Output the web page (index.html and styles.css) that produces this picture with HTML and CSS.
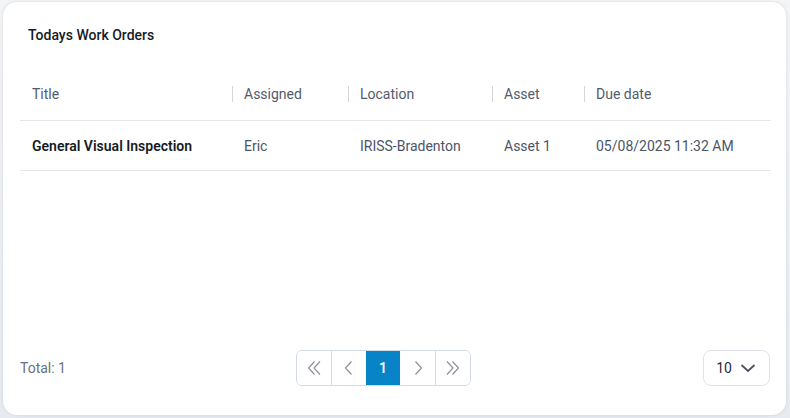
FILE: index.html
```html
<!DOCTYPE html>
<html>
<head>
  <title>Todays Work Orders</title>
  <link rel="stylesheet" href="styles.css">
</head>
<body>

  <div class="card">
    <h3 class="card-title">Todays Work Orders</h3>

    <div class="table-wrap">
      <table class="orders">
        <colgroup>
          <col style="width: 212px">
          <col style="width: 116px">
          <col style="width: 144px">
          <col style="width: 92px">
          <col>
        </colgroup>
        <thead>
          <tr>
            <th>Title</th>
            <th>Assigned</th>
            <th>Location</th>
            <th>Asset</th>
            <th>Due date</th>
          </tr>
        </thead>
        <tbody>
          <tr>
            <td class="title-cell">General Visual Inspection</td>
            <td>Eric</td>
            <td>IRISS-Bradenton</td>
            <td>Asset 1</td>
            <td>05/08/2025 11:32 AM</td>
          </tr>
        </tbody>
      </table>
    </div>

    <div class="footer">
      <span class="total">Total: 1</span>

      <div class="pager">
        <button class="page-btn">
          <svg width="18" height="18" viewBox="0 0 18 18"><path d="M9.5 2.5 L3.5 9 L9.5 15.5 M15 2.5 L9 9 L15 15.5" fill="none" stroke="#8b929c" stroke-width="1.2"/></svg>
        </button>
        <button class="page-btn">
          <svg width="18" height="18" viewBox="0 0 18 18"><path d="M11.5 2.5 L5.5 9 L11.5 15.5" fill="none" stroke="#8b929c" stroke-width="1.2"/></svg>
        </button>
        <button class="page-btn active">1</button>
        <button class="page-btn">
          <svg width="18" height="18" viewBox="0 0 18 18"><path d="M6.5 2.5 L12.5 9 L6.5 15.5" fill="none" stroke="#8b929c" stroke-width="1.2"/></svg>
        </button>
        <button class="page-btn">
          <svg width="18" height="18" viewBox="0 0 18 18"><path d="M3 2.5 L9 9 L3 15.5 M8.5 2.5 L14.5 9 L8.5 15.5" fill="none" stroke="#8b929c" stroke-width="1.2"/></svg>
        </button>
      </div>

      <div class="page-size">
        <span>10</span>
        <svg width="16" height="16" viewBox="0 0 16 16"><path d="M1.5 5 L8 11 L14.5 5" fill="none" stroke="#4b5260" stroke-width="1.8"/></svg>
      </div>
    </div>
  </div>

</body>
</html>
```

FILE: styles.css
```css
body {
  margin: 0;
  font-family: Roboto, "Liberation Sans", sans-serif;
  background: linear-gradient(#f3f4f6, #e7ebf0);
  height: 418px;
  overflow: hidden;
}

.card {
  box-sizing: border-box;
  margin: 2px 0 0 3px;
  width: 783px;
  height: 413px;
  background-color: #fff;
  border-radius: 14px;
  box-shadow: 0 0 3px rgba(120, 140, 160, 0.25);
  padding: 0 16px 29px 17px;
  display: flex;
  flex-direction: column;
}

.card-title {
  margin: 0;
  padding: 25px 0 0 8px;
  height: 41px;
  font-size: 14px;
  font-weight: 500;
  color: #161b26;
  line-height: 16px;
}

.table-wrap {
  flex: 1;
}

.orders {
  width: 751px;
  border-collapse: collapse;
  table-layout: fixed;
}

.orders th {
  height: 52px;
  padding: 0 0 0 12px;
  text-align: left;
  font-size: 14px;
  font-weight: 400;
  color: #525b6b;
  border-bottom: 1px solid #e3e6ea;
  white-space: nowrap;
}

.orders th:not(:first-child)::before {
  content: "";
  display: inline-block;
  width: 1px;
  height: 16px;
  background-color: #d3d7dd;
  vertical-align: -3px;
  margin: 0 11px 0 -12px;
}

.orders td {
  height: 49px;
  padding: 0 0 0 12px;
  font-size: 14px;
  color: #4d5567;
  border-bottom: 1px solid #e3e6ea;
  white-space: nowrap;
}

.orders .title-cell {
  font-weight: 600;
  color: #161b26;
}

.footer {
  display: flex;
  align-items: center;
  justify-content: space-between;
}

.total {
  font-size: 14px;
  color: #667085;
  width: 277px;
}

.pager {
  display: flex;
  border: 1px solid #d3dae3;
  border-radius: 6px;
  overflow: hidden;
  height: 34px;
}

.page-btn {
  width: 35px;
  height: 34px;
  border: none;
  border-left: 1px solid #d3dae3;
  background-color: #fff;
  padding: 0;
  display: flex;
  align-items: center;
  justify-content: center;
  font-family: inherit;
  font-size: 14px;
  cursor: pointer;
}

.page-btn:first-child {
  border-left: none;
  width: 34px;
}

.page-btn.active {
  background-color: #0783c7;
  color: #fff;
  font-weight: 600;
  border-left: none;
  width: 35px;
}

.page-btn.active + .page-btn {
  border-left: none;
}

.page-size {
  box-sizing: border-box;
  width: 67px;
  height: 36px;
  border: 1px solid #e1e3ea;
  border-radius: 8px;
  display: flex;
  align-items: center;
  justify-content: space-between;
  padding: 0 13px 0 12px;
  font-size: 14px;
  color: #1f2a44;
  margin-left: 232px;
}
```
